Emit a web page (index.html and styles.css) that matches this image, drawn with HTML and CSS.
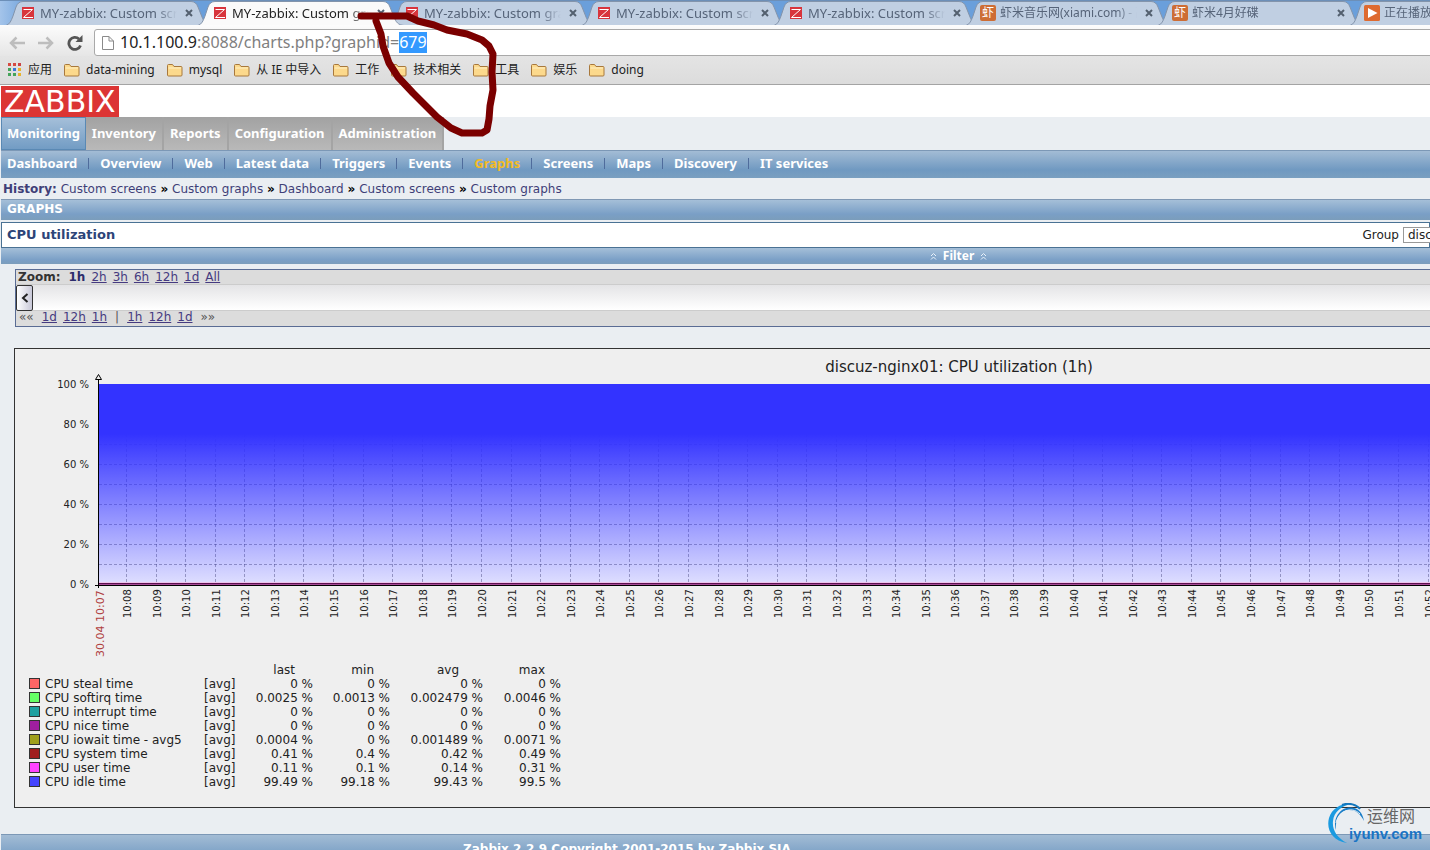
FILE: index.html
```html
<!DOCTYPE html>
<html lang="zh-CN">
<head>
<meta charset="utf-8">
<title>MY-zabbix: Custom graphs</title>
<link rel="stylesheet" href="styles.css">
</head>
<body>
<svg class="defs" aria-hidden="true">
  <symbol id="z" viewBox="0 0 16 16"><rect x="2" y="2" width="12" height="12" fill="#d8343c"/><path d="M3.500 4.500H12.500L3.500 12.500H13" fill="none" stroke="#fff" stroke-width="1"/></symbol>
  <symbol id="play" viewBox="0 0 16 16"><rect width="16" height="16" rx="1.500" fill="#de6a30"/><path d="M4 3L13.500 8L4 13z" fill="#fff"/></symbol>
  <symbol id="folder" viewBox="0 0 16 14"><path d="M.5 12V2.500Q.5 1.500 1.500 1.500H5.500L7 3.500H14Q15 3.500 15 4.500V12Q15 13 14 13H1.500Q.5 13 .5 12z" fill="#fcd98c" stroke="#a8783c"/><path d="M1.500 5H14" stroke="#fff0c4"/></symbol>
  <symbol id="shape" viewBox="0 0 206 25"><path d="M0 24.500C4 23 5 20 7 15L10 6Q12 .5 17 .5H185Q190 .5 192 6L196 16C198 21 200 24 206 24.500"/></symbol>
</svg>
<header class="browser">
  <nav class="tabs" id="tabs"></nav>
  <div class="toolbar">
    <button class="tool" aria-label="Back"><svg width="18" height="16"><path d="M17 8H3M8.500 2.500L3 8L8.500 13.500" fill="none" stroke="#bdbdbd" stroke-width="2.500"/></svg></button>
    <button class="tool" aria-label="Forward"><svg width="18" height="16"><path d="M1 8H15M9.500 2.500L15 8L9.500 13.500" fill="none" stroke="#bdbdbd" stroke-width="2.500"/></svg></button>
    <button class="tool" aria-label="Reload"><svg width="18" height="16"><path d="M14.500 10.500A6 6 0 1 1 13 4" fill="none" stroke="#555" stroke-width="2.800"/><path d="M16.500 0V7H9.500z" fill="#555"/></svg></button>
    <div class="omnibox">
      <svg width="14" height="16"><path d="M1.500 1.500H8L12.500 6V14.500H1.500zM8 1.500V6H12.500" fill="#fff" stroke="#8a8a8a"/></svg>
      <label class="host" for="url">10.1.100.9</label><input id="url" type="text" value=":8088/charts.php?graphid=679" spellcheck="false">
    </div>
  </div>
  <nav class="bookmarks">
    <a href="#"><svg width="14" height="14"><g><path d="M0 0h3v3H0zM5 0h3v3H5z" fill="#d64a41"/><path d="M10 0h3v3h-3z" fill="#c44"/><path d="M0 5h3v3H0zM0 10h3v3H0z" fill="#45a45a"/><path d="M5 5h3v3H5z" fill="#3b78d8"/><path d="M10 5h3v3h-3zM10 10h3v3h-3z" fill="#e8b32c"/><path d="M5 10h3v3H5z" fill="#45a45a"/></g></svg>应用</a>
    <a href="#"><svg width="16" height="14"><use href="#folder"/></svg>data-mining</a>
    <a href="#"><svg width="16" height="14"><use href="#folder"/></svg>mysql</a>
    <a href="#"><svg width="16" height="14"><use href="#folder"/></svg>从 IE 中导入</a>
    <a href="#"><svg width="16" height="14"><use href="#folder"/></svg>工作</a>
    <a href="#"><svg width="16" height="14"><use href="#folder"/></svg>技术相关</a>
    <a href="#"><svg width="16" height="14"><use href="#folder"/></svg>工具</a>
    <a href="#"><svg width="16" height="14"><use href="#folder"/></svg>娱乐</a>
    <a href="#"><svg width="16" height="14"><use href="#folder"/></svg>doing</a>
  </nav>
</header>
<div class="brand"><a class="logo" href="#">ZABBIX</a></div>
<div class="page">
  <nav class="menu">
    <a class="on" href="#">Monitoring</a><a href="#">Inventory</a><a href="#">Reports</a><a href="#">Configuration</a><a href="#">Administration</a>
  </nav>
  <nav class="submenu">
    <a href="#">Dashboard</a><a href="#">Overview</a><a href="#">Web</a><a href="#">Latest data</a><a href="#">Triggers</a><a href="#">Events</a><a class="on" href="#">Graphs</a><a href="#">Screens</a><a href="#">Maps</a><a href="#">Discovery</a><a href="#">IT services</a>
  </nav>
  <div class="history"><b>History:</b> <a href="#">Custom screens</a> <strong>»</strong> <a href="#">Custom graphs</a> <strong>»</strong> <a href="#">Dashboard</a> <strong>»</strong> <a href="#">Custom screens</a> <strong>»</strong> <a href="#">Custom graphs</a></div>
  <h1 class="bar">GRAPHS</h1>
  <div class="head">
    <h2>CPU utilization</h2>
    <label for="group">Group</label>
    <select id="group"><option>discuz</option></select>
  </div>
  <button class="filter"><svg width="7" height="8"><path d="M1 4L3.500 1.500L6 4M1 7.500L3.500 5L6 7.500"/></svg>Filter<svg width="7" height="8"><path d="M1 4L3.500 1.500L6 4M1 7.500L3.500 5L6 7.500"/></svg></button>
  <section class="timeline">
    <div class="range"><b>Zoom:</b><b class="cur">1h</b><a href="#">2h</a><a href="#">3h</a><a href="#">6h</a><a href="#">12h</a><a href="#">1d</a><a href="#">All</a></div>
    <div class="track"><button aria-label="Scroll left"><svg width="8" height="10"><path d="M6.500 1L2 5L6.500 9" fill="none" stroke="#222" stroke-width="2"/></svg></button></div>
    <div class="range step"><span>««</span><a href="#">1d</a><a href="#">12h</a><a href="#">1h</a><span class="mid">|</span><a href="#">1h</a><a href="#">12h</a><a href="#">1d</a><span>»»</span></div>
  </section>
  <section class="graph">
    <svg class="plot" id="plot" role="img" aria-label="CPU utilization">
      <defs><linearGradient id="g" x1="0" y1="0" x2="0" y2="1"><stop offset=".25" stop-color="#33f"/><stop offset="1" stop-color="#33f" stop-opacity=".08"/></linearGradient></defs>
    </svg>
    <table class="legend">
      <thead><tr><th></th><th></th><th>last</th><th>min</th><th>avg</th><th>max</th></tr></thead>
      <tbody>
        <tr><td><i class="c1"></i>CPU steal time</td><td>[avg]</td><td>0 %</td><td>0 %</td><td>0 %</td><td>0 %</td></tr>
        <tr><td><i class="c2"></i>CPU softirq time</td><td>[avg]</td><td>0.0025 %</td><td>0.0013 %</td><td>0.002479 %</td><td>0.0046 %</td></tr>
        <tr><td><i class="c3"></i>CPU interrupt time</td><td>[avg]</td><td>0 %</td><td>0 %</td><td>0 %</td><td>0 %</td></tr>
        <tr><td><i class="c4"></i>CPU nice time</td><td>[avg]</td><td>0 %</td><td>0 %</td><td>0 %</td><td>0 %</td></tr>
        <tr><td><i class="c5"></i>CPU iowait time - avg5</td><td>[avg]</td><td>0.0004 %</td><td>0 %</td><td>0.001489 %</td><td>0.0071 %</td></tr>
        <tr><td><i class="c6"></i>CPU system time</td><td>[avg]</td><td>0.41 %</td><td>0.4 %</td><td>0.42 %</td><td>0.49 %</td></tr>
        <tr><td><i class="c7"></i>CPU user time</td><td>[avg]</td><td>0.11 %</td><td>0.1 %</td><td>0.14 %</td><td>0.31 %</td></tr>
        <tr><td><i class="c8"></i>CPU idle time</td><td>[avg]</td><td>99.49 %</td><td>99.18 %</td><td>99.43 %</td><td>99.5 %</td></tr>
      </tbody>
    </table>
  </section>
  <footer class="footer">Zabbix 2.2.9 Copyright 2001-2015 by Zabbix SIA</footer>
</div>
<svg class="pen" width="150" height="150" aria-hidden="true"><path d="M11 16H38L57 16L68 21L84 25L97 30L117 34L132 40L139 46L143 54L142 72L143 90L140 106L139 119L137 130L132 133H112L101 128L87 117L76 106L63 93L48 77L39 63L33 46L31 34L26 21"/></svg>
<div class="mark">
  <svg width="40" height="42"><path d="M20 40C5 38-1 26 2 15C5 5 15 0 24 1C14 3 7 9 6 18C5 27 10 35 20 40z" fill="#1b9ae0"/><path d="M9 27C5 14 15 2 27 5C32 6 36 11 37 18C33 10 28 7 22 7C13 7 8 15 9 27z" fill="#1a7ec8"/><path d="M9 20C11 9 24 2 33 11" fill="none" stroke="#eaf0f4"/><path d="M15 2C22-1 30 2 33 6" fill="none" stroke="#1577bd" stroke-width="2"/></svg>
  <div><span>运维网</span><b>iyunv.com</b></div>
</div>
<script src="app.js" charset="utf-8"></script>
</body>
</html>
```
FILE: styles.css
```css
* { box-sizing: border-box; }
body { margin: 0; height: 100vh; overflow: hidden; position: relative; background: #eaeef2; font: 12px/14px "DejaVu Sans", Verdana, sans-serif; color: #222; }
a { color: inherit; text-decoration: none; }
button { border: 0; padding: 0; margin: 0; background: none; font: inherit; color: inherit; }
h1, h2 { margin: 0; }
.defs { position: absolute; width: 0; height: 0; }

.browser { font-family: "Noto Sans", "Noto Sans CJK SC", sans-serif; border-bottom: 1px solid #a4a4a4; }
.tabs { display: flex; height: 25px; padding-left: 6px; background: linear-gradient(90deg, #a4c4ea, #6a9fdb 30px); overflow: hidden; border-top: 1px solid #6c8fb8; }
.tab { position: relative; flex: 0 0 206px; min-width: 0; margin-right: -14px; height: 24px; display: flex; align-items: center; padding: 0 15px 0 14px; font-size: 13px; color: #566479; }
.tab .shape { position: absolute; left: 0; top: 0; width: 206px; height: 25px; fill: #c0cfe2; stroke: #8394ab; }
.tab.on { z-index: 1; color: #222; }
.tab.on .shape { fill: #fafafa; }
.tab .icon { position: relative; flex: none; width: 16px; height: 16px; margin-right: 4px; }
.xia { background: #cd6d35; border-radius: 2px; color: #fff; font-size: 12px; line-height: 16px; text-align: center; }
.tab .name { position: relative; flex: 1; min-width: 0; margin-right: 4px; overflow: hidden; white-space: nowrap; line-height: 20px; -webkit-mask-image: linear-gradient(90deg, #000 85%, transparent); mask-image: linear-gradient(90deg, #000 85%, transparent); }
.tab.cjk .name { font-size: 12px; }
.tab button { position: relative; flex: none; width: 16px; height: 16px; display: grid; place-items: center; stroke: #53606f; stroke-width: 2; }

.toolbar { display: flex; align-items: center; height: 31px; padding-top: 4px; background: linear-gradient(#fcfcfc, #e6e6e6); }
.tool { width: 29px; height: 16px; padding-left: 8px; display: flex; }
.omnibox { flex: 1; display: flex; align-items: center; height: 27px; margin: 0 -4px 0 7px; padding-left: 6px; background: #fff; border: 1px solid #a9a9a9; border-radius: 3px; font-size: 16px; }
.host { margin-left: 5px; color: #222; line-height: 21px; }
.omnibox input { flex: 1; border: 0; outline: 0; padding: 0; background: none; font: inherit; line-height: 21px; color: #808080; }
.omnibox input::selection { background: #3399ff; color: #fff; }
.bookmarks { display: flex; align-items: center; height: 28px; gap: 12px; padding-left: 8px; background: linear-gradient(#e4e4e4, #dcdcdc); color: #222; }
.bookmarks a { display: flex; align-items: center; gap: 6px; line-height: 18px; white-space: nowrap; }

.brand { background: #fff; height: 32px; padding: 1px; display: flex; }
.logo { background: #dc3534; color: #fff; font-size: 30px; line-height: 31px; height: 31px; padding: 0 3px; }

.page { padding-left: 1px; }
.menu, .submenu { font: bold 13px/32px "Noto Sans", sans-serif; color: #fff; display: flex; white-space: nowrap; }
.menu a { background: linear-gradient(#a2a2a2, #b9b9b9); padding: 0 6px; border-right: 2px solid #a4a4a4; height: 33px; }
.menu .on { background: linear-gradient(#a5bfd9, #729cc4); border: 1px solid #5a89b4; padding: 0 5px; line-height: 30px; }
.submenu { height: 28px; line-height: 24px; padding-left: 6px; background: linear-gradient(#a3bcd5, #7099c1 70%, #7a9fc0); border-top: 1px solid #7c98b6; }
.submenu a + a::before { content: ""; display: inline-block; width: 1px; height: 11px; margin: 0 11px; background: #4f6c9c; vertical-align: -1px; }
.submenu .on { color: #f4bb24; }
.submenu .on::before { color: #fff; }
.history { height: 21px; line-height: 22px; padding-left: 2px; white-space: nowrap; color: #000; }
.history a, .history b { color: #3f3f78; }
.bar { height: 21px; padding-left: 6px; font: bold 12px/18px "DejaVu Sans", sans-serif; color: #fff; background: linear-gradient(#a5bfd8, #7a9fc6 70%, #7b9dbb); border-top: 1px solid #8098b4; }
.head { display: flex; align-items: center; height: 26px; margin-top: 2px; padding-left: 5px; background: #fff; border: 1px solid #4a7294; }
.head h2 { flex: 1; font-size: 13px; color: #2d4478; }
.head label { margin-right: 4px; }
.head select { appearance: none; width: 60px; height: 16px; margin-right: -34px; padding: 0 4px; border: 1px solid #999; border-radius: 0; background: #fff; color: #222; font: 12px/14px "DejaVu Sans", sans-serif; }
.filter { display: flex; align-items: center; gap: 6px; width: 100%; height: 16px; padding-left: 65%; color: #fff; font: bold 12px/14px "Noto Sans", sans-serif; background: linear-gradient(#a5bfd8, #7a9fc6 75%, #7b9dbb); }
.filter svg { fill: none; stroke: #eaf2fa; }

.timeline { margin: 5px 0 0 14px; border: 1px solid #5a6c94; border-right: 0; background: #dcdcdc; color: #333; }
.range { display: flex; gap: 6px; height: 14px; padding-left: 2px; line-height: 14px; }
.range b { margin-right: 2px; }
.range .cur { margin: 0; color: #2c2c6c; }
.range a { color: #453a80; text-decoration: underline; }
.step { padding-left: 3px; height: 15px; line-height: 12px; }
.step span { color: #555; margin-right: 2px; }
.step .mid { margin: 0 2px; }
.step span:last-child { margin: 0 2px; }
.track { height: 27px; border: 1px solid #ccc; border-width: 1px 0; background: linear-gradient(#e4e4e6, #fff); }
.track button { width: 17px; height: 26px; border: 1px solid #333; border-radius: 2px; background: linear-gradient(90deg, #fff, #c8c8d8); display: grid; place-items: center; }

.graph { margin: 21px 0 0 13px; border: 1px solid #333; border-right: 0; background: #efefef; padding-bottom: 18px; }
.plot { display: block; width: 100%; height: 314px; font-size: 10px; fill: #222; }
.plot .title { font-size: 15px; }
.plot .start { font-size: 11px; fill: #b04040; }
.plot .grid { stroke: #444466; stroke-opacity: .45; stroke-dasharray: 3 2; }
.legend { border-collapse: collapse; margin-left: 14px; table-layout: fixed; width: 532px; }
.legend th, .legend td { padding: 0; height: 14px; line-height: 14px; font-weight: normal; text-align: right; white-space: nowrap; }
.legend th:nth-child(1) { width: 175px; }
.legend th:nth-child(2) { width: 32px; }
.legend th:nth-child(3) { width: 77px; padding-right: 18px; }
.legend th:nth-child(4) { width: 77px; padding-right: 16px; }
.legend th:nth-child(5) { width: 93px; padding-right: 24px; }
.legend th:nth-child(6) { width: 78px; padding-right: 16px; }
.legend td:nth-child(-n+2) { text-align: left; }
.legend i { display: inline-block; width: 11px; height: 11px; margin-right: 5px; border: 1px solid #333; vertical-align: -1px; }
.c1 { background: #f66; } .c2 { background: #6f6; } .c3 { background: #1ea0a0; } .c4 { background: #a01ea0; }
.c5 { background: #a0a01e; } .c6 { background: #a01e1e; } .c7 { background: #f4f; } .c8 { background: #44f; }
.footer { margin-top: 26px; height: 26px; padding: 5px 0 0 462px; line-height: 18px; font-weight: bold; color: #fff; white-space: nowrap; background: linear-gradient(#a3bcd5, #7099c1); border-top: 1px solid #7c98b6; }

.pen { position: absolute; left: 350px; top: 0; fill: none; stroke: #7b0000; stroke-width: 7; stroke-linecap: round; stroke-linejoin: round; z-index: 3; pointer-events: none; }
.mark { position: absolute; right: 8px; bottom: 5px; display: flex; font-family: "Liberation Sans", "Noto Sans CJK SC", sans-serif; }
.mark div { display: flex; flex-direction: column; margin-left: -18px; }
.mark span { color: #666; font-size: 16px; line-height: 20px; padding: 4px 0 0 18px; }
.mark b { color: #1a74c4; font-size: 15px; line-height: 14px; }
```
FILE: app.js
```
const tabs = [
  ["z", "MY-zabbix: Custom screens"], ["z", "MY-zabbix: Custom graphs"], ["z", "MY-zabbix: Custom graphs"],
  ["z", "MY-zabbix: Custom screens"], ["z", "MY-zabbix: Custom screens"],
  ["x", "虾米音乐网(xiami.com) - 高品质"], ["x", "虾米4月好碟"], ["play", "正在播放"]
];
document.getElementById("tabs").innerHTML = tabs.map(([icon, name], i) => `
  <div class="tab${i === 1 ? " on" : ""}${icon === "z" ? "" : " cjk"}">
    <svg class="shape"><use href="#shape"/></svg>
    ${icon === "x" ? '<span class="icon xia">虾</span>' : `<svg class="icon"><use href="#${icon}"/></svg>`}
    <span class="name">${name}</span>
    <button aria-label="Close tab"><svg width="8" height="8"><path d="M1 1L7 7M7 1L1 7"/></svg></button>
  </div>`).join("");

const url = document.getElementById("url");
url.focus();
url.setSelectionRange(25, 28);

/* plot area: x from 83, y from 35 (100 %) to 235 (0 %) */
let s = '<text class="title" x="944" y="23" text-anchor="middle">discuz-nginx01: CPU utilization (1h)</text>';
s += '<svg x="84" y="0" width="100%" height="314"><rect y="35" width="100%" height="200" fill="#eeeeff"/></svg>';
for (let y = 55; y < 235; y += 20) s += `<line class="grid" x1="84" x2="100%" y1="${y + 0.5}" y2="${y + 0.5}"/>`;
let labels = "";
for (let m = 8; m < 53; m++) {
  const x = Math.round(112 + (m - 8) * 29.58);
  s += `<line class="grid" x1="${x - 0.5}" x2="${x - 0.5}" y1="35" y2="235"/>`;
  labels += `<text transform="translate(${x + 4} 269) rotate(-90)">10:${String(m).padStart(2, "0")}</text>`;
}
s += '<rect x="84" y="35" width="100%" height="200" fill="url(#g)"/>';
s += '<rect x="84" y="233" width="100%" height="1" fill="#f0c4ec"/><rect x="84" y="234" width="100%" height="1" fill="#5c1050"/><rect x="84" y="235" width="100%" height="1" fill="#a84c98"/><rect x="80" y="236" width="100%" height="1" fill="#000"/>';
s += '<path d="M83.500 30V239M80.500 30.500H86.500L83.500 25.500z" fill="#efefef" stroke="#000"/>';
for (let v = 0; v <= 100; v += 20) s += `<text x="74" y="${239 - v * 2}" text-anchor="end">${v} %</text>`;
s += labels + '<text class="start" transform="translate(89 308) rotate(-90)">30.04 10:07</text>';
document.getElementById("plot").insertAdjacentHTML("beforeend", s);
```
